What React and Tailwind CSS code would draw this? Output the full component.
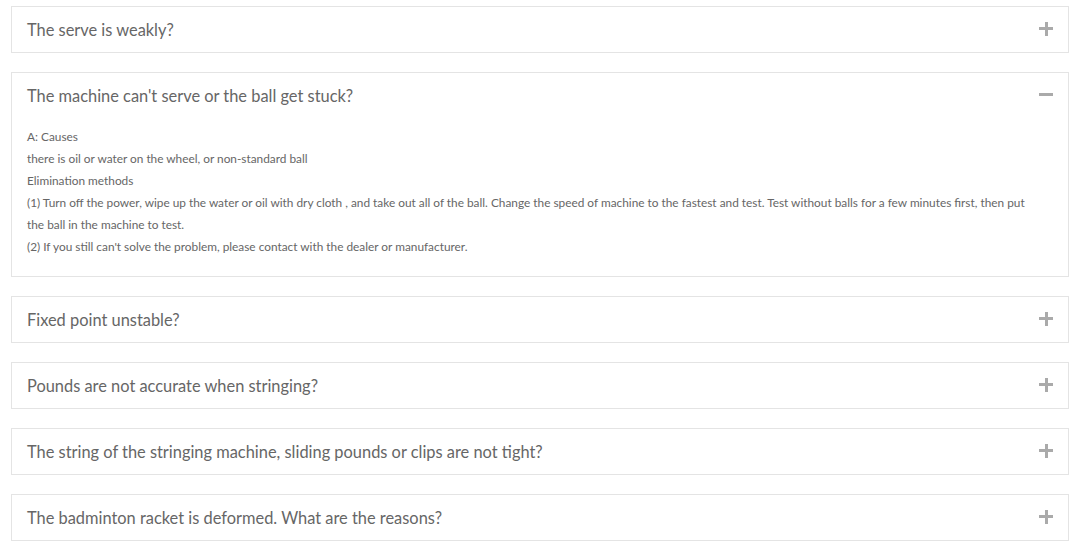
const items = [
  { q: 'The serve is weakly?' },
  {
    q: "The machine can't serve or the ball get stuck?",
    open: true,
    a: [
      'A: Causes',
      'there is oil or water on the wheel, or non-standard ball',
      'Elimination methods',
      '(1) Turn off the power, wipe up the water or oil with dry cloth , and take out all of the ball. Change the speed of machine to the fastest and test. Test without balls for a few minutes first, then put the ball in the machine to test.',
      "(2) If you still can't solve the problem, please contact with the dealer or manufacturer.",
    ],
  },
  { q: 'Fixed point unstable?' },
  { q: 'Pounds are not accurate when stringing?' },
  { q: 'The string of the stringing machine, sliding pounds or clips are not tight?' },
  { q: 'The badminton racket is deformed. What are the reasons?' },
];

const Toggle = ({ open }) => (
  <span className="relative w-[14px] h-[14px] shrink-0 -mt-[2px]">
    <span className="absolute left-0 top-[5px] w-[14px] h-[3px] bg-[#aaaaaa]" />
    {!open && <span className="absolute top-0 left-[5.5px] w-[3px] h-[14px] bg-[#aaaaaa]" />}
  </span>
);

export default function App() {
  return (
    <div
      className="bg-white min-h-screen px-[11px] pt-[6px] flex flex-col gap-[19px] text-[#666666]"
      style={{ fontFamily: 'Lato, "Open Sans", sans-serif' }}
    >
      {items.map((item) => (
        <div key={item.q} className="border border-[#e4e4e4] bg-white">
          <div className="h-[45px] flex items-center justify-between pl-[15px] pr-[15px]">
            <span className="text-[16.4px] text-[#666666] mt-[2px]">{item.q}</span>
            <Toggle open={item.open} />
          </div>
          {item.open && (
            <div className="pl-[15px] pr-[25px] pt-[8px] pb-[18px] text-[11.85px] leading-[22px] text-[#666666]">
              {item.a.map((line) => (
                <p key={line}>{line}</p>
              ))}
            </div>
          )}
        </div>
      ))}
    </div>
  );
}
